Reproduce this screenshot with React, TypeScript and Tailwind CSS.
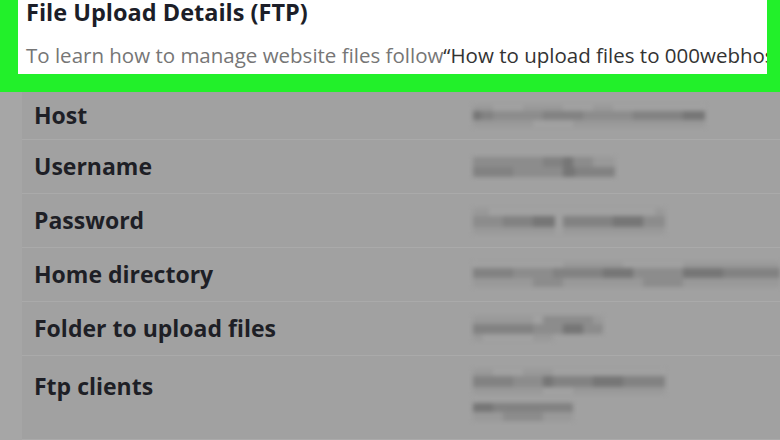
import React from 'react';

type Seg = { w: number; c: string };

// Pixelated placeholder for the blurred-out values
function Smudge({ lines }: { lines: { h: number; segs: Seg[] }[] }) {
  return (
    <div className="flex flex-col blur-[2px]">
      {lines.map((line, i) => (
        <div key={i} className="flex">
          {line.segs.map((s, j) => (
            <div key={j} style={{ width: s.w, height: line.h, background: s.c }} />
          ))}
        </div>
      ))}
    </div>
  );
}

const A = '#999999';
const B = '#8c8c8c';
const C = '#828282';
const D = '#767676';
const E = '#a1a1a1';

const rows: { label: string; h: string; value: React.ReactNode; top?: boolean }[] = [
  {
    label: 'Host',
    h: 'h-[48px]',
    value: (
      <Smudge
        lines={[
          { h: 6, segs: [{ w: 20, c: A }, { w: 30, c: E }, { w: 40, c: A }, { w: 30, c: E }, { w: 20, c: A }, { w: 92, c: E }] },
          { h: 9, segs: [{ w: 8, c: D }, { w: 12, c: C }, { w: 50, c: B }, { w: 40, c: C }, { w: 50, c: B }, { w: 50, c: C }, { w: 22, c: D }] },
          { h: 7, segs: [{ w: 60, c: A }, { w: 40, c: E }, { w: 132, c: A }] },
        ]}
      />
    ),
  },
  {
    label: 'Username',
    h: 'h-[54px]',
    value: (
      <Smudge
        lines={[
          { h: 10, segs: [{ w: 70, c: B }, { w: 20, c: C }, { w: 10, c: D }, { w: 20, c: B }, { w: 22, c: A }] },
          { h: 10, segs: [{ w: 40, c: C }, { w: 50, c: B }, { w: 12, c: D }, { w: 40, c: C }] },
        ]}
      />
    ),
  },
  {
    label: 'Password',
    h: 'h-[54px]',
    value: (
      <Smudge
        lines={[
          { h: 8, segs: [{ w: 16, c: A }, { w: 166, c: E }, { w: 10, c: A }] },
          { h: 11, segs: [{ w: 30, c: B }, { w: 30, c: C }, { w: 22, c: D }, { w: 8, c: E }, { w: 50, c: C }, { w: 30, c: D }, { w: 22, c: B }] },
          { h: 7, segs: [{ w: 82, c: A }, { w: 8, c: E }, { w: 102, c: A }] },
        ]}
      />
    ),
  },
  {
    label: 'Home directory',
    h: 'h-[54px]',
    value: (
      <Smudge
        lines={[
          { h: 6, segs: [{ w: 90, c: E }, { w: 60, c: A }, { w: 60, c: E }, { w: 97, c: A }] },
          { h: 10, segs: [{ w: 40, c: C }, { w: 40, c: B }, { w: 50, c: C }, { w: 30, c: D }, { w: 50, c: B }, { w: 40, c: D }, { w: 57, c: C }] },
          { h: 9, segs: [{ w: 60, c: A }, { w: 30, c: B }, { w: 80, c: A }, { w: 40, c: B }, { w: 97, c: A }] },
        ]}
      />
    ),
  },
  {
    label: 'Folder to upload files',
    h: 'h-[54px]',
    value: (
      <Smudge
        lines={[
          { h: 8, segs: [{ w: 60, c: A }, { w: 10, c: E }, { w: 50, c: B }, { w: 10, c: A }] },
          { h: 10, segs: [{ w: 60, c: C }, { w: 30, c: B }, { w: 20, c: D }, { w: 20, c: B }] },
          { h: 7, segs: [{ w: 10, c: A }, { w: 50, c: E }, { w: 20, c: A }] },
        ]}
      />
    ),
  },
  {
    label: 'Ftp clients',
    h: 'h-[84px]',
    top: true,
    value: (
      <div className="flex flex-col gap-[9px]">
        <Smudge
          lines={[
            { h: 7, segs: [{ w: 20, c: A }, { w: 30, c: E }, { w: 30, c: A }, { w: 112, c: E }] },
            { h: 11, segs: [{ w: 40, c: C }, { w: 30, c: B }, { w: 10, c: D }, { w: 40, c: C }, { w: 30, c: D }, { w: 42, c: C }] },
            { h: 7, segs: [{ w: 70, c: A }, { w: 30, c: E }, { w: 92, c: A }] },
          ]}
        />
        <Smudge
          lines={[
            { h: 9, segs: [{ w: 20, c: D }, { w: 80, c: C }] },
            { h: 9, segs: [{ w: 30, c: A }, { w: 40, c: B }, { w: 30, c: A }] },
          ]}
        />
      </div>
    ),
  },
];

export default function App() {
  return (
    <div
      className="w-[780px] h-[440px] overflow-hidden bg-[#a6a6a6] flex flex-col"
      style={{ fontFamily: '"Open Sans", "Noto Sans", sans-serif' }}
    >
      {/* Highlighted header */}
      <div className="shrink-0 bg-[#22f02a] pl-[18px] pr-[13px] pb-[18px]">
        <div className="bg-white h-[74px] pl-[8px] overflow-hidden">
          <h2 className="text-[23.5px] font-bold text-[#1c1e28] leading-[24px] whitespace-nowrap">
            File Upload Details (FTP)
          </h2>
          <p className="mt-[19px] text-[20.5px] leading-[24px] whitespace-nowrap text-[#767676]">
            To learn how to manage website files follow
            <span className="text-[#333333]">“How to upload files to 000webhost”</span>
          </p>
        </div>
      </div>

      {/* Details table */}
      <div className="flex-1 ml-[22px] bg-[#a1a1a1]">
        {rows.map((r) => (
          <div
            key={r.label}
            className={`flex ${r.h} border-b border-[#aaaaaa] ${r.top ? 'items-start pt-[13px]' : 'items-center'}`}
          >
            <div className="w-[451px] pl-[12px] text-[23px] font-bold text-[#1e1f26] whitespace-nowrap">
              {r.label}
            </div>
            <div className="flex-1">{r.value}</div>
          </div>
        ))}
      </div>
    </div>
  );
}
